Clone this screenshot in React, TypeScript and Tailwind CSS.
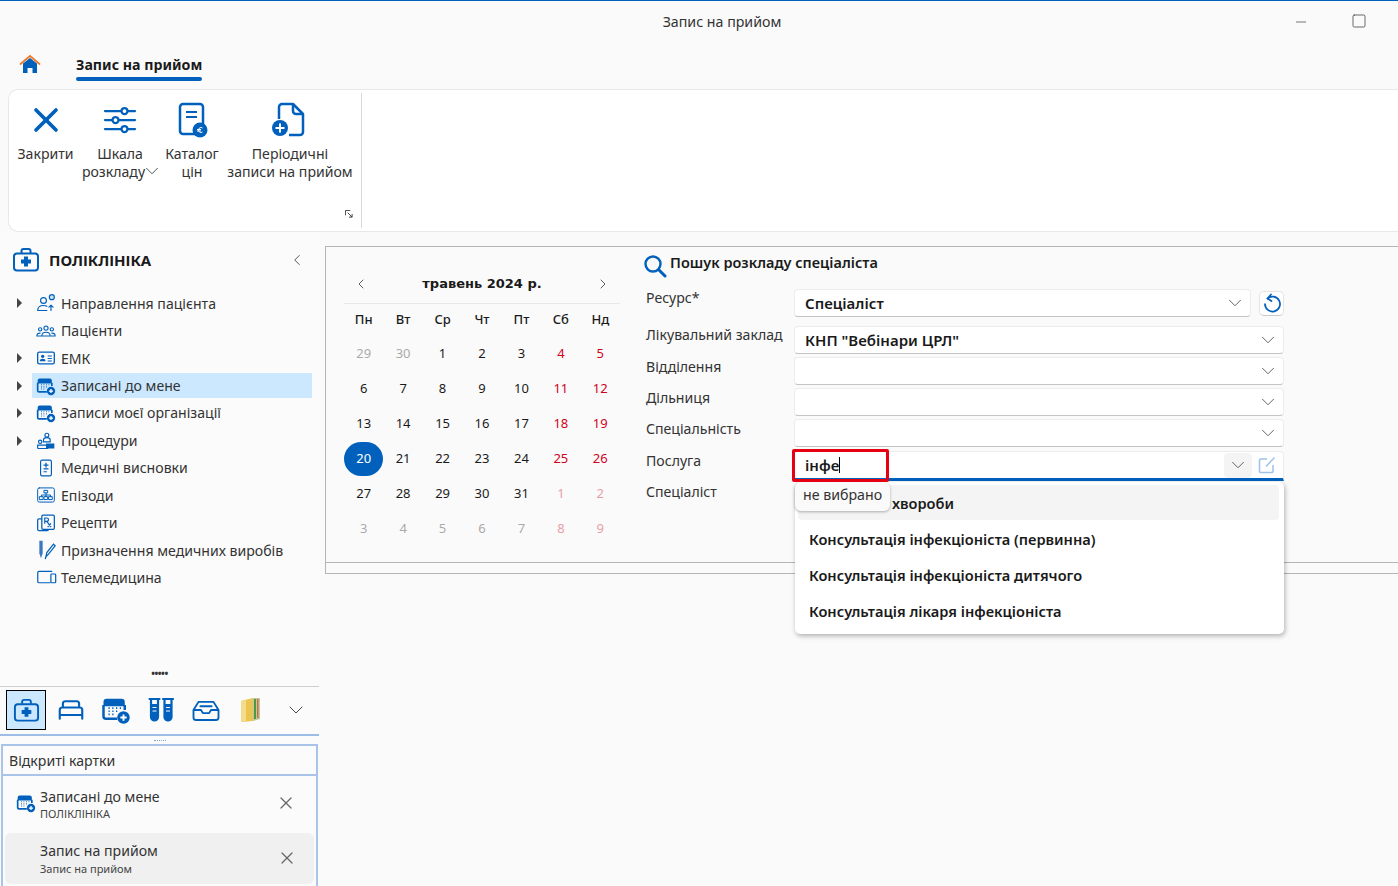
import React from 'react';
import { ChevronDown, ChevronLeft, ChevronRight, Minus, Square, X } from 'lucide-react';

const BLUE = '#0060bb';

const Stroke = ({ size = 20, w, h, children, sw = 1.5 }: { size?: number; w?: number; h?: number; children: React.ReactNode; sw?: number }) => (
  <svg width={w ?? size} height={h ?? size} viewBox="0 0 24 24" fill="none" stroke={BLUE} strokeWidth={sw} strokeLinecap="round" strokeLinejoin="round" className="shrink-0">
    {children}
  </svg>
);

// calendar with a plus badge, used in tree, bottom bar and open cards
const CalendarPlus = ({ size = 20 }: { size?: number }) => (
  <svg width={size} height={size} viewBox="0 0 24 24" fill="none" className="shrink-0">
    <path d="M2 9V5.5A2.5 2.5 0 0 1 4.500 3h12A2.500 2.500 0 0 1 19 5.500V9z" fill={BLUE} />
    <path d="M2 8v9a2 2 0 0 0 2 2h9M19 8v4" stroke={BLUE} strokeWidth="2" />
    <path d="M6 10.500h1M9 10.500h1M12 10.500h1M15 10.500h1M6 13h1M9 13h1M12 13h1M6 15.500h1M9 15.500h1" stroke={BLUE} strokeWidth="1.300" />
    <circle cx="18" cy="18" r="5" fill={BLUE} />
    <path d="M18 15.500v5M15.500 18h5" stroke="#fff" strokeWidth="1.500" />
  </svg>
);

const MedKit = ({ size = 24 }: { size?: number }) => (
  <svg width={size} height={size} viewBox="0 0 28 28" fill="none" className="shrink-0">
    <rect x="2" y="7.500" width="24" height="17" rx="3" stroke={BLUE} strokeWidth="2" />
    <path d="M9.500 7V5a2 2 0 0 1 2-2h5a2 2 0 0 1 2 2v2" stroke={BLUE} strokeWidth="2" />
    <path d="M12 10.500h4v3h3v4h-3v3h-4v-3H9v-4h3z" fill={BLUE} />
  </svg>
);

const HomeIcon = () => (
  <svg width="22" height="20" viewBox="0 0 22 20" fill="none">
    <path d="M4 9.500 11 4l7 5.500V19h-4.500v-5h-5v5H4z" fill={BLUE} />
    <path d="M1.500 10 11 2l9.500 8" stroke="#f0782a" strokeWidth="1.800" strokeLinecap="round" />
  </svg>
);

const treeIcons: Record<string, React.ReactNode> = {
  referral: (
    <Stroke size={20} sw={1.400}>
      <circle cx="9" cy="9" r="3.500" />
      <path d="M2 21c0-4 3-6 7-6 1.500 0 3 .3 4 1M2 21h11" />
      <circle cx="19" cy="5" r="3" fill="#cfe2f5" />
      <path d="M18 21v-6M15.500 17l2.500-2.500 2.500 2.500" />
    </Stroke>
  ),
  patients: (
    <Stroke size={20} sw={1.300}>
      <circle cx="12" cy="8.500" r="2.500" />
      <circle cx="5" cy="10" r="2" />
      <circle cx="19" cy="10" r="2" />
      <path d="M7 18c0-3 2-4.500 5-4.500s5 1.500 5 4.500zM1 18c0-2 1.500-3.500 4-3.500M23 18c0-2-1.500-3.500-4-3.500M1 18h5M18 18h5" />
    </Stroke>
  ),
  card: (
    <svg width="20" height="20" viewBox="0 0 24 24" fill="none" className="shrink-0">
      <rect x="2" y="5" width="20" height="14" rx="2" stroke={BLUE} strokeWidth="1.600" />
      <circle cx="8" cy="10" r="2" fill={BLUE} />
      <path d="M4.500 16c0-2 1.500-3 3.500-3s3.500 1 3.500 3z" fill={BLUE} />
      <path d="M14 9.500h5M14 12.500h5M14 15.500h5" stroke={BLUE} strokeWidth="1.300" />
    </svg>
  ),
  calendar: <CalendarPlus />,
  procedure: (
    <svg width="20" height="20" viewBox="0 0 24 24" fill="none" className="shrink-0">
      <circle cx="13" cy="5" r="2.300" stroke={BLUE} strokeWidth="1.400" />
      <path d="M9 13v-2.500c0-1.500 1.500-2.500 4-2.500s4 1 4 2.500V13z" stroke={BLUE} strokeWidth="1.400" />
      <circle cx="5" cy="13" r="2" stroke={BLUE} strokeWidth="1.400" />
      <path d="M2 17h12v4H3a1 1 0 0 1-1-1z" stroke={BLUE} strokeWidth="1.400" />
      <path d="M12 15h10v6H12z" fill={BLUE} />
    </svg>
  ),
  report: (
    <Stroke w={20} h={20} sw={1.400}>
      <rect x="5.500" y="2.500" width="13" height="19" rx="2" />
      <path d="M12 6v5M9.500 8.500h5M9.500 13h5M9.500 16.500h3" />
    </Stroke>
  ),
  episodes: (
    <Stroke size={20} sw={1.200}>
      <rect x="2" y="3.500" width="20" height="17" rx="2" />
      <rect x="10" y="6.500" width="4" height="3" />
      <rect x="4.500" y="14" width="4" height="3.500" />
      <rect x="10" y="14" width="4" height="3.500" />
      <rect x="15.500" y="14" width="4" height="3.500" />
      <path d="M12 9.500V14M6.500 14v-2h11v2" />
    </Stroke>
  ),
  recipes: (
    <svg width="20" height="20" viewBox="0 0 24 24" fill="none" className="shrink-0">
      <rect x="7" y="2.500" width="15" height="17" rx="1.500" stroke={BLUE} strokeWidth="1.500" />
      <path d="M7 7H3.500A1.500 1.500 0 0 0 2 8.500v11A1.500 1.500 0 0 0 3.500 21h10a1.500 1.500 0 0 0 1.500-1.500" stroke={BLUE} strokeWidth="1.500" />
      <path d="M10.500 13V6h2.500a2 2 0 0 1 0 4h-2.500M13 10l5 7M18 12.500l-4 4.500" stroke={BLUE} strokeWidth="1.400" />
    </svg>
  ),
  devices: (
    <svg width="20" height="22" viewBox="0 0 24 26" fill="none" className="shrink-0">
      <path d="M4 2h4v15l-2 6-2-6z" fill="#3c78bf" />
      <path d="M12 21l1-5 8-10 2 2-8 10z" stroke={BLUE} strokeWidth="1.500" />
      <path d="M12 21l-1 3" stroke={BLUE} strokeWidth="1.500" />
    </svg>
  ),
  tele: (
    <Stroke size={21} sw={1.400}>
      <path d="M16 18H3.500A1.500 1.500 0 0 1 2 16.500v-10A1.500 1.500 0 0 1 3.500 5H18" />
      <rect x="17" y="8" width="5.500" height="10" rx="1" />
    </Stroke>
  ),
};

const tree = [
  { label: 'Направлення пацієнта', icon: 'referral', arrow: true },
  { label: 'Пацієнти', icon: 'patients' },
  { label: 'ЕМК', icon: 'card', arrow: true },
  { label: 'Записані до мене', icon: 'calendar', arrow: true, active: true },
  { label: 'Записи моєї організації', icon: 'calendar', arrow: true },
  { label: 'Процедури', icon: 'procedure', arrow: true },
  { label: 'Медичні висновки', icon: 'report' },
  { label: 'Епізоди', icon: 'episodes' },
  { label: 'Рецепти', icon: 'recipes' },
  { label: 'Призначення медичних виробів', icon: 'devices' },
  { label: 'Телемедицина', icon: 'tele' },
];

const weekdays = ['Пн', 'Вт', 'Ср', 'Чт', 'Пт', 'Сб', 'Нд'];
const weeks = [
  [29, 30, 1, 2, 3, 4, 5],
  [6, 7, 8, 9, 10, 11, 12],
  [13, 14, 15, 16, 17, 18, 19],
  [20, 21, 22, 23, 24, 25, 26],
  [27, 28, 29, 30, 31, 1, 2],
  [3, 4, 5, 6, 7, 8, 9],
];

const dayClass = (row: number, col: number, d: number) => {
  const outside = (row === 0 && d > 20) || (row >= 4 && d < 20);
  if (row === 3 && col === 0) return 'text-white';
  if (outside) return col >= 5 ? 'text-[#e8a0a8]' : 'text-[#aaaaaa]';
  return col >= 5 ? 'text-[#d0021b]' : 'text-[#1a1a1a]';
};

const RibbonButton = ({ icon, lines, chevron, width }: { icon: React.ReactNode; lines: string[]; chevron?: boolean; width: string }) => (
  <div className={`flex flex-col items-center shrink-0 ${width}`}>
    <div className="h-[36px] flex items-center justify-center">{icon}</div>
    <div className="mt-[7px] text-center leading-[18px] text-[14.100px] text-[#333]">
      <div>{lines[0]}</div>
      {lines[1] && (
        <div className="h-[18px] flex items-center justify-center whitespace-nowrap">
          {lines[1]}
          {chevron && <ChevronDown size={22} strokeWidth={1} className="text-[#444] ml-[-4px] mr-[-5px] mt-[-2px]" />}
        </div>
      )}
    </div>
  </div>
);

const Field = ({ value, className = '' }: { value?: string; className?: string }) => (
  <div className={`h-[28px] bg-white rounded-[4px] border border-[#ececec] border-b-[#c4c4c4] flex items-center justify-between pl-[10px] pr-[4px] font-semibold text-[15px] text-[#1a1a1a] ${className}`}>
    <span className="leading-[20px]">{value}</span>
    <ChevronDown size={22} strokeWidth={1} className="text-[#555]" />
  </div>
);

const FormRow = ({ label, children, labelClass = '', className = '' }: { label: string; children?: React.ReactNode; labelClass?: string; className?: string }) => (
  <div className={`flex ${className}`}>
    <div className={`w-[148px] shrink-0 leading-[20px] text-[#333] ${labelClass}`}>{label}</div>
    <div className="w-[490px] shrink-0">{children}</div>
  </div>
);

export default function App() {
  return (
    <div className="w-[1398px] h-[886px] overflow-hidden bg-[#fafafa] border-t border-[#0060bb] flex flex-col text-[14.100px] text-[#1a1a1a] font-['Noto_Sans','Open_Sans',sans-serif]">
      {/* title bar */}
      <div className="h-[43px] shrink-0 flex items-center relative">
        <div className="w-full pl-[46px] text-center pb-[2px] text-[14.200px] text-[#333]">Запис на прийом</div>
        <div className="absolute right-[31px] top-[11px] flex items-center gap-[42px] text-[#333]">
          <Minus size={16} strokeWidth={1} className="mt-[2px]" />
          <Square size={16} strokeWidth={1.100} />
        </div>
      </div>

      {/* tabs */}
      <div className="h-[45px] shrink-0 flex items-start pl-[19px] pt-[10px]">
        <HomeIcon />
        <div className="ml-[35px] flex flex-col mt-[1px]">
          <span className="font-bold text-[14.200px] leading-[20px] whitespace-nowrap">Запис на прийом</span>
          <span className="mt-[2px] h-[4px] rounded-full bg-[#0060bb]" />
        </div>
      </div>

      {/* ribbon */}
      <div className="h-[143px] shrink-0 ml-[8px] bg-white rounded-l-[10px] border border-r-0 border-[#e8e8e8] flex relative">
        <div className="w-[353px] flex items-start pt-[9px] pl-[4px] border-r border-[#d8d8d8] my-[3px] h-[135px]">
          <RibbonButton
            width="w-[65px]"
            lines={['Закрити']}
            icon={<X size={40} strokeWidth={2.200} color={BLUE} />}
          />
          <RibbonButton
            width="w-[84px]"
            lines={['Шкала', 'розкладу']}
            chevron
            icon={
              <Stroke w={36} h={36} sw={1.500}>
                <path d="M2 6h20M2 12h20M2 18h20" />
                <circle cx="15" cy="6" r="2" fill="#fff" />
                <circle cx="9" cy="12" r="2" fill="#fff" />
                <circle cx="15" cy="18" r="2" fill="#fff" />
              </Stroke>
            }
          />
          <RibbonButton
            width="w-[60px]"
            lines={['Каталог', 'цін']}
            icon={
              <svg width="36" height="36" viewBox="0 0 36 36" fill="none">
                <rect x="6" y="2" width="23" height="30" rx="3" stroke={BLUE} strokeWidth="2.500" />
                <path d="M12 10h11M12 15h11" stroke={BLUE} strokeWidth="2" />
                <circle cx="26" cy="28" r="7.500" fill={BLUE} />
                <path d="M28.500 26a2.500 2.500 0 1 0 0 4M23 27.500h4M23 29h4" stroke="#fff" strokeWidth="1" />
              </svg>
            }
          />
          <RibbonButton
            width="w-[136px]"
            lines={['Періодичні', 'записи на прийом']}
            icon={
              <svg width="38" height="38" viewBox="0 0 38 38" fill="none">
                <path d="M8 18V6a3 3 0 0 1 3-3h11l10 10v18a3 3 0 0 1-3 3H18" stroke={BLUE} strokeWidth="2.500" strokeLinejoin="round" />
                <path d="M22 3v7a3 3 0 0 0 3 3h7" stroke={BLUE} strokeWidth="2.500" />
                <circle cx="9" cy="27" r="8" fill={BLUE} />
                <path d="M9 22.500v9M4.500 27h9" stroke="#fff" strokeWidth="2" />
              </svg>
            }
          />
        </div>
        <svg width="8" height="8" viewBox="0 0 9 9" fill="none" stroke="#333" className="absolute left-[336px] top-[120px]">
          <path d="M.5 6V.5H6M3 3l5 5M8 4.500V8H4.500" />
        </svg>
      </div>

      <div className="flex-1 flex min-h-0">
        {/* sidebar */}
        <div className="w-[319px] shrink-0 flex flex-col pt-[5px] bg-[#fbfbfb] h-full">
          <div className="h-[46px] flex items-center pl-[12px] pr-[13px]">
            <MedKit size={28} />
            <span className="ml-[9px] font-bold text-[15px]">ПОЛІКЛІНІКА</span>
            <ChevronLeft size={18} strokeWidth={1.200} className="ml-auto text-[#444]" />
          </div>
          <div className="mt-[6.600px] flex flex-col pr-[7px]">
            {tree.map(item => (
              <div key={item.label} className="h-[27.450px] flex items-center">
                <div className="w-[32px] shrink-0 flex justify-center pl-[6px]">
                  {item.arrow && <div className="w-0 h-0 border-y-[5px] border-y-transparent border-l-[5px] border-l-[#444]" />}
                </div>
                <div className={`flex-1 h-[25px] flex items-center pl-[3px] ${item.active ? 'bg-[#cce8ff]' : ''}`}>
                  <div className="w-[22px] flex justify-center shrink-0">{treeIcons[item.icon]}</div>
                  <span className="ml-[4px] whitespace-nowrap text-[#333]">{item.label}</span>
                </div>
              </div>
            ))}
          </div>

          <div className="mt-auto text-center text-[#333] font-bold text-[10px] leading-[10px] mb-[8px] tracking-[-0.5px]">•••••</div>
          <div className="h-[50px] border-t border-[#cfcfcf] border-b-2 border-b-[#9dbde6] flex items-start pt-[3px] pl-[6px] shrink-0">
            <div className="w-[40px] h-[40px] bg-[#cce8ff] border border-black flex items-center justify-center">
              <MedKit size={27} />
            </div>
            <div className="w-[50px] h-[40px] flex items-center justify-center">
              <Stroke size={30} sw={1.700}>
                <path d="M3 19v-7a2 2 0 0 1 2-2h14a2 2 0 0 1 2 2v7M3 16h18M5.500 10V7a2 2 0 0 1 2-2h9a2 2 0 0 1 2 2v3" />
              </Stroke>
            </div>
            <div className="w-[40px] h-[40px] flex items-center justify-center"><CalendarPlus size={30} /></div>
            <div className="w-[50px] h-[40px] flex items-center justify-center">
              <svg width="26" height="26" viewBox="0 0 26 26" fill="none" stroke={BLUE} strokeWidth="2.200" strokeLinecap="round">
                <path d="M1.500 2h10M15 2h10" />
                <path d="M3 2v18a3.500 3.500 0 0 0 7 0V2M16.500 2v18a3.500 3.500 0 0 0 7 0V2" />
                <path d="M3 7h7v13a3.500 3.500 0 0 1-7 0zM16.500 7h7v13a3.500 3.500 0 0 1-7 0z" fill={BLUE} stroke="none" />
                <path d="M5 10.500h3M5 14h3M18.500 10.500h3M18.500 14h3" stroke="#fff" strokeWidth="1.200" />
              </svg>
            </div>
            <div className="w-[40px] h-[40px] flex items-center justify-center">
              <Stroke size={30} sw={1.500}>
                <path d="M2 12l4-6.500h12l4 6.500v6a2 2 0 0 1-2 2H4a2 2 0 0 1-2-2zM2 12h6l1.500 2.500h5L16 12h6M7.500 9h9" />
              </Stroke>
            </div>
            <div className="w-[50px] h-[40px] flex items-center justify-center">
              <svg width="24" height="28" viewBox="0 0 24 28">
                <path d="M2 5l12-3v23l-12 1z" fill="#ecc451" />
                <path d="M2 5l5-1v21l-5 1z" fill="#f5dc8c" />
                <path d="M14 2h7v21l-7 2z" fill="#c2c7a0" />
                <path d="M15 3h2v20h-2z" fill="#4a9a4a" />
                <path d="M18 3h1.500v19H18z" fill="#c9703a" />
              </svg>
            </div>
            <div className="h-[40px] flex items-center ml-[8px]">
              <ChevronDown size={24} strokeWidth={1} className="text-[#444]" />
            </div>
          </div>
          <div className="h-[8px] shrink-0 flex justify-center items-center">
            <div className="w-[12px] border-t border-dotted border-[#7fa6d8]" />
          </div>
          <div className="h-[142px] shrink-0 mx-[1px] border-x-2 border-t-2 border-[#a9c4e8] flex flex-col">
            <div className="h-[30px] flex items-center pl-[6px] pt-[2px] border-b-2 border-[#a9c4e8] shrink-0 text-[#333]">Відкриті картки</div>
            <div className="h-[55px] flex items-center pl-[13px] pr-[20px] pb-[1px] shrink-0">
              <CalendarPlus size={20} />
              <div className="ml-[4px] flex-1 pt-[3px]">
                <div className="leading-[18px] text-[#333]">Записані до мене</div>
                <div className="text-[11px] leading-[15px] text-[#444]">ПОЛІКЛІНІКА</div>
              </div>
              <X size={20} strokeWidth={1.500} className="text-[#666]" />
            </div>
            <div className="h-[51px] mt-[2px] mx-[2px] bg-[#f0f0f0] rounded-[6px] flex items-center pl-[35px] pr-[17px] pb-[2px] shrink-0">
              <div className="flex-1 pt-[2px]">
                <div className="leading-[19px] text-[#333]">Запис на прийом</div>
                <div className="text-[11px] leading-[17px] text-[#444]">Запис на прийом</div>
              </div>
              <X size={20} strokeWidth={1.500} className="text-[#666]" />
            </div>
          </div>
        </div>

        {/* main */}
        <div className="flex-1 pl-[6px] pt-[14px] min-w-0">
          <div className="h-[328px] border-y border-l border-[#b5b5b5] flex flex-col">
            <div className="h-[316px] shrink-0 border-b border-[#b5b5b5] flex">
              {/* calendar */}
              <div className="w-[296px] pl-[18px] pt-[27px] shrink-0">
                <div className="w-[276px] h-[30px] border-b border-[#e8e8e8] flex items-start justify-between px-[9px] pt-[1px]">
                  <ChevronLeft size={16} strokeWidth={1.300} className="text-[#444] mt-[1px]" />
                  <span className="font-['DejaVu_Sans',sans-serif] font-bold text-[13px] leading-[18px]">травень 2024 р.</span>
                  <ChevronRight size={16} strokeWidth={1.300} className="text-[#444] mt-[1px]" />
                </div>
                <div className="grid grid-cols-7 w-[276px] mt-[5px] font-medium text-[13px]">
                  {weekdays.map(d => (
                    <div key={d} className="h-[20px] flex items-center justify-center leading-none">{d}</div>
                  ))}
                </div>
                <div className="grid grid-cols-7 w-[276px] mt-[7px] text-[13px]">
                  {weeks.map((week, r) =>
                    week.map((d, c) => (
                      <div key={`${r}-${c}`} className="h-[35px] flex items-center justify-center">
                        <span className={`flex items-center justify-center ${r === 3 && c === 0 ? 'w-[39px] h-[34px] rounded-full bg-[#0060bb]' : ''} ${dayClass(r, c, d)}`}>{d}</span>
                      </div>
                    ))
                  )}
                </div>
              </div>

              {/* search form */}
              <div className="flex-1 pl-[24px] pt-[3px] relative">
                <div className="flex items-center h-[24px]">
                  <svg width="24" height="24" viewBox="0 0 24 24" fill="none" className="mt-[7px] ml-[-3px]" stroke={BLUE}>
                    <circle cx="10" cy="10" r="7.500" strokeWidth="2.400" />
                    <path d="M16 16l6 6" strokeWidth="3" strokeLinecap="round" />
                  </svg>
                  <span className="ml-[3px] font-semibold leading-[20px] text-[14.500px]">Пошук розкладу спеціаліста</span>
                </div>
                <div className="mt-[15px] flex flex-col">
                  <FormRow label="Ресурс*" labelClass="mt-[-1px]">
                    <div className="flex items-center">
                      <Field value="Спеціаліст" className="w-[457px]" />
                      <div className="ml-[8px] w-[25px] h-[25px] bg-white rounded-[5px] border border-[#e4e4e4] border-b-[#c8c8c8] flex items-center justify-center">
                        <svg width="19" height="21" viewBox="0 0 19 21" fill="none" stroke={BLUE} strokeWidth="1.700" strokeLinecap="round" strokeLinejoin="round">
                          <path d="M5.500 5.500A7.500 7.500 0 1 1 3 11" />
                          <path d="M9 1.500 5.500 5.500 9.500 8" />
                        </svg>
                      </div>
                    </div>
                  </FormRow>
                  <FormRow label="Лікувальний заклад" labelClass="mt-[-1px]" className="mt-[9px]">
                    <Field value='КНП "Вебінари ЦРЛ"' />
                  </FormRow>
                  <FormRow label="Відділення" className="mt-[3px]"><Field /></FormRow>
                  <FormRow label="Дільниця" className="mt-[3px]"><Field /></FormRow>
                  <FormRow label="Спеціальність" className="mt-[3px]"><Field /></FormRow>
                  <FormRow label="Послуга" className="mt-[4px]">
                    <div className="h-[30px] bg-white rounded-t-[4px] border border-[#ececec] border-b-[3px] border-b-[#0060bb] flex items-center pl-[10px] pr-[4px] font-semibold text-[15px] relative">
                      <span>інфе</span>
                      <span className="w-px h-[16px] bg-black" />
                      <div className="ml-auto w-[28px] h-[25px] bg-[#f4f4f4] rounded-[4px] flex items-center justify-center">
                        <ChevronDown size={22} strokeWidth={1} className="text-[#555]" />
                      </div>
                      <div className="ml-[3px] w-[24px] h-[25px] flex items-center justify-center">
                        <svg width="18" height="18" viewBox="0 0 18 18" fill="none" stroke="#9cc3ea" strokeWidth="1.500">
                          <path d="M9 3H2.500a1 1 0 0 0-1 1v11.500a1 1 0 0 0 1 1H14a1 1 0 0 0 1-1V9M8 10.500 16.500 1.500" />
                        </svg>
                      </div>
                    </div>
                  </FormRow>
                  <FormRow label="Спеціаліст" className="mt-[1px]" />
                </div>

                {/* dropdown overlay */}
                <div className="absolute left-[173px] top-[235px] w-[489px] h-[152px] bg-white rounded-[5px] shadow-[1px_2px_5px_rgba(0,0,0,0.3)] p-[3px] font-semibold text-[14.600px] z-10">
                  <div className="h-[35px] mb-[1px] w-[481px] bg-[#f4f4f4] rounded-[4px] flex items-center pt-[2px] pl-[94px]">хвороби</div>
                  {['Консультація інфекціоніста (первинна)', 'Консультація інфекціоніста дитячого', 'Консультація лікаря інфекціоніста'].map(t => (
                    <div key={t} className="h-[36px] flex items-center pt-[2px] pl-[11px] whitespace-nowrap">{t}</div>
                  ))}
                </div>
                <div className="absolute left-[173px] top-[235px] w-[95px] h-[29px] bg-[#fafafa] rounded-[6px] shadow-[0_1px_3px_rgba(0,0,0,0.3)] flex items-center justify-center pb-[4px] text-[14.200px] text-[#333] z-20">не вибрано</div>
                <div className="absolute left-[170px] top-[202px] w-[97px] h-[33px] border-[3px] border-[#e60012] rounded-[2px] z-20" />
              </div>
            </div>
          </div>
        </div>
      </div>
    </div>
  );
}
